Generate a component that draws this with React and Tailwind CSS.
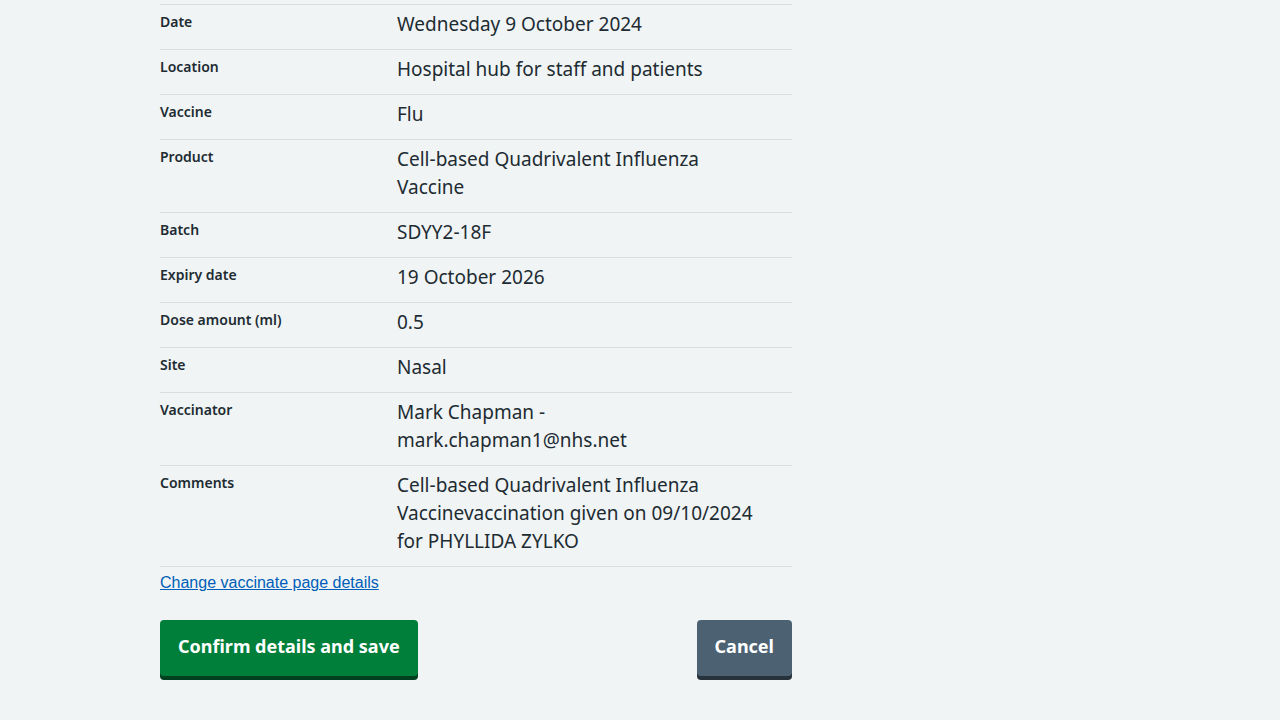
const details = [
  ["Date", "Wednesday 9 October 2024"],
  ["Location", "Hospital hub for staff and patients"],
  ["Vaccine", "Flu"],
  ["Product", "Cell-based Quadrivalent Influenza Vaccine"],
  ["Batch", "SDYY2-18F"],
  ["Expiry date", "19 October 2026"],
  ["Dose amount (ml)", "0.5"],
  ["Site", "Nasal"],
  ["Vaccinator", "Mark Chapman - mark.chapman1@nhs.net"],
  [
    "Comments",
    "Cell-based Quadrivalent Influenza Vaccinevaccination given on 09/10/2024 for PHYLLIDA ZYLKO",
  ],
];

function SummaryRow({ label, value }) {
  return (
    <div className="flex border-b border-[#d8dde0] pt-[5px] pb-[11px]">
      <dt className="w-3/8 shrink-0 text-[14px] leading-6 font-semibold">{label}</dt>
      <dd className="grow pr-6 text-[19px] leading-7">{value}</dd>
    </div>
  );
}

export default function App() {
  return (
    <div className="min-h-screen bg-[#f0f4f5] font-['Noto_Sans','Open_Sans',sans-serif] text-[#212b32]">
      <main className="mx-auto max-w-[960px] pt-1 pb-10">
        <div className="w-2/3 pr-2">
          <dl className="border-t border-[#d8dde0]">
            {details.map(([label, value]) => (
              <SummaryRow key={label} label={label} value={value} />
            ))}
          </dl>
          <a
            href="#vaccinate"
            className="mt-1 inline-block font-['Liberation_Sans',Arial,sans-serif] text-[16px] leading-6 text-[#005eb8] underline"
          >
            Change vaccinate page details
          </a>
          <div className="mt-[25px] flex items-start justify-between">
            <button
              type="button"
              className="rounded bg-[#007f3b] px-[18px] pt-3 pb-4 text-[18px] leading-7 font-bold text-white shadow-[0_4px_0_#00401e]"
            >
              Confirm details and save
            </button>
            <button
              type="button"
              className="rounded bg-[#4c6272] px-[18px] pt-3 pb-4 text-[18px] leading-7 font-bold text-white shadow-[0_4px_0_#263139]"
            >
              Cancel
            </button>
          </div>
        </div>
      </main>
    </div>
  );
}
